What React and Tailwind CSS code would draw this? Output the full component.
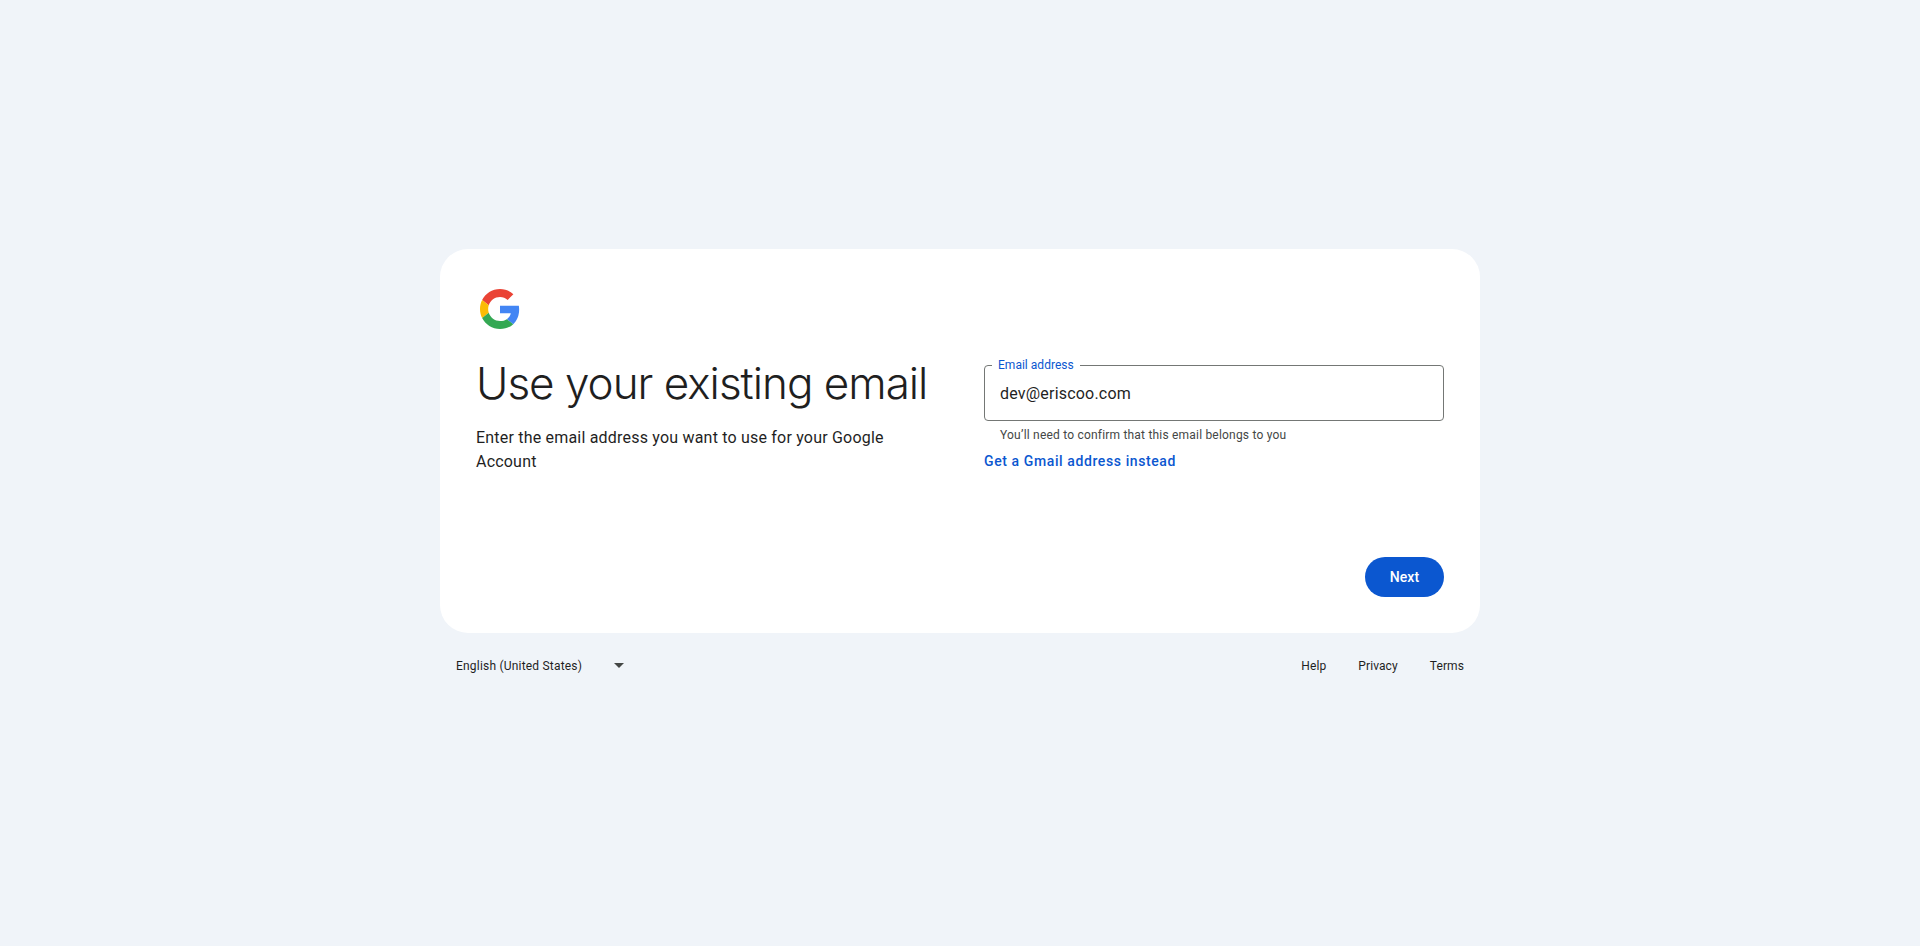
import React, { useState } from 'react';

const GoogleLogo = () => (
  <svg viewBox="0 0 48 48" className="w-10 h-10 block">
    <path fill="#EA4335" d="M24 9.5c3.54 0 6.71 1.22 9.21 3.6l6.85-6.85C35.9 2.38 30.47 0 24 0 14.62 0 6.51 5.38 2.56 13.22l7.98 6.19C12.43 13.72 17.74 9.5 24 9.5z" />
    <path fill="#4285F4" d="M46.98 24.55c0-1.57-.15-3.09-.38-4.55H24v9.02h12.94c-.58 2.96-2.26 5.48-4.78 7.18l7.73 6c4.51-4.18 7.09-10.36 7.09-17.65z" />
    <path fill="#FBBC05" d="M10.53 28.59c-.48-1.45-.76-2.99-.76-4.59s.27-3.14.76-4.59l-7.98-6.19C.92 16.46 0 20.12 0 24c0 3.88.92 7.54 2.56 10.78l7.97-6.19z" />
    <path fill="#34A853" d="M24 48c6.48 0 11.93-2.13 15.89-5.81l-7.73-6c-2.15 1.45-4.92 2.3-8.16 2.3-6.26 0-11.57-4.22-13.47-9.91l-7.98 6.19C6.51 42.62 14.62 48 24 48z" />
  </svg>
);

const App = () => {
  const [email, setEmail] = useState('dev@eriscoo.com');

  return (
    <div className="min-h-screen w-full bg-[#f0f4f9] flex flex-col items-center justify-center font-['Roboto',sans-serif] text-[#1f1f1f]">
      <div className="w-[1040px]">
        {/* Card */}
        <div className="h-[384px] bg-white rounded-[28px] p-9 flex flex-col">
          <div className="p-1 w-12 h-12">
            <GoogleLogo />
          </div>

          <div className="flex gap-12 mt-6">
            <div className="w-[460px]">
              <h1 className="text-[44px] leading-[52px] font-['Inter',sans-serif] font-[350] tracking-[-1px] whitespace-nowrap">
                Use your existing email
              </h1>
              <p className="mt-4 pt-px text-base leading-6 tracking-[0.2px]">
                Enter the email address you want to use for your Google Account
              </p>
            </div>

            <div className="w-[460px] pt-2">
              {/* Email field */}
              <div className="relative">
                <input
                  type="email"
                  value={email}
                  onChange={(e) => setEmail(e.target.value)}
                  className="w-full h-14 px-[15px] rounded border border-[#747775] text-base tracking-[0.2px] text-[#1f1f1f] outline-none"
                />
                <label className="absolute left-2 -top-2 px-1.5 bg-white text-xs leading-4 tracking-[0.02px] text-[#0b57d0]">
                  Email address
                </label>
              </div>
              <p className="mt-1.5 pl-4 text-xs leading-4 tracking-[0.2px] text-[#444746]">
                You’ll need to confirm that this email belongs to you
              </p>
              <a href="#" className="block mt-2 text-sm leading-5 font-medium tracking-[0.6px] text-[#0b57d0]">
                Get a Gmail address instead
              </a>
            </div>
          </div>

          <div className="mt-auto flex justify-end">
            <button className="w-[79px] h-10 rounded-full bg-[#0b57d0] text-white text-sm font-medium tracking-[0.1px]">
              Next
            </button>
          </div>
        </div>

        {/* Footer */}
        <div className="h-16 pt-0.5 flex items-center justify-between px-4 text-xs">
          <div className="flex items-center tracking-[0.2px]">
            <span>English (United States)</span>
            <span className="ml-8 w-0 h-0 border-x-[5px] border-x-transparent border-t-[5px] border-t-[#444746] mb-0.5" />
          </div>
          <div className="flex gap-8 tracking-[0.1px]">
            <a href="#">Help</a>
            <a href="#">Privacy</a>
            <a href="#">Terms</a>
          </div>
        </div>
      </div>
    </div>
  );
};

export default App;
